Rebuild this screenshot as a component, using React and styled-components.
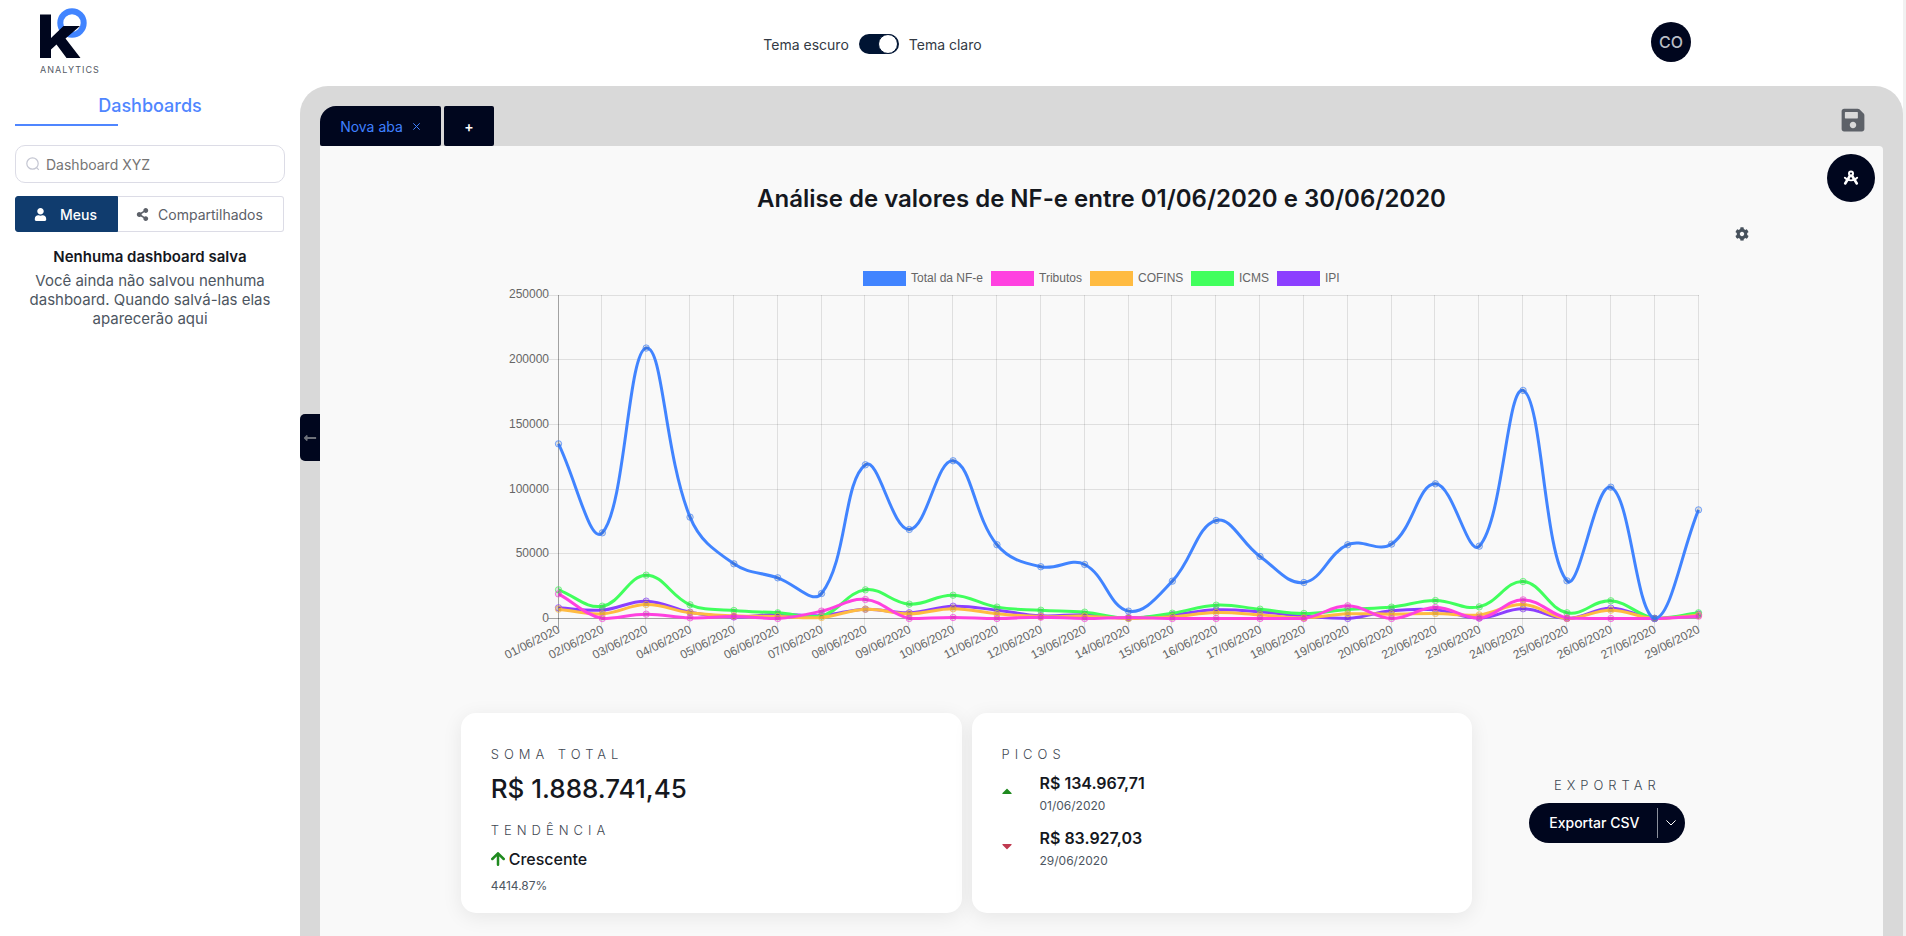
import React, { useState } from 'react';
import styled, { createGlobalStyle } from 'styled-components';
import {
    FaUser,
    FaShareAlt,
    FaSave,
    FaCog,
    FaLongArrowAltLeft,
    FaCaretUp,
    FaCaretDown
} from 'react-icons/fa';

const labels = [
    '01/06/2020', '02/06/2020', '03/06/2020', '04/06/2020', '05/06/2020', '06/06/2020', '07/06/2020',
    '08/06/2020', '09/06/2020', '10/06/2020', '11/06/2020', '12/06/2020', '13/06/2020', '14/06/2020',
    '15/06/2020', '16/06/2020', '17/06/2020', '18/06/2020', '19/06/2020', '20/06/2020', '22/06/2020',
    '23/06/2020', '24/06/2020', '25/06/2020', '26/06/2020', '27/06/2020', '29/06/2020'
];

const datasets = [
    {
        label: 'Total da NF-e',
        color: '#4184ff',
        legendX: 363,
        data: [134967, 66230, 209000, 78340, 42260, 31440, 19330, 118800, 68800, 121900, 57000, 40000, 41750, 5700, 28860, 75760, 47900, 27830, 57000, 57500, 104100, 55900, 176270, 29120, 101500, 0, 83927]
    },
    {
        label: 'Tributos',
        color: '#ff41e0',
        legendX: 491,
        data: [19000, 0, 3350, 500, 1500, 0, 5700, 14700, 0, 800, 0, 1000, 0, 800, 0, 0, 0, 0, 9800, 0, 8500, 300, 14400, 400, 0, 0, 1800]
    },
    {
        label: 'COFINS',
        color: '#ffbb41',
        legendX: 590,
        data: [7200, 3600, 10800, 4400, 2100, 1500, 800, 7200, 3600, 7500, 3600, 1500, 1800, 0, 1300, 4600, 2800, 500, 3600, 3350, 3900, 2800, 10800, 0, 6400, 0, 2500]
    },
    {
        label: 'ICMS',
        color: '#41ff5d',
        legendX: 691,
        data: [22160, 9500, 33500, 10600, 6200, 4400, 2000, 22160, 11100, 18000, 8800, 6400, 4900, 300, 4100, 10300, 7200, 3900, 7000, 8800, 13900, 9000, 28600, 4400, 13700, 200, 4400]
    },
    {
        label: 'IPI',
        color: '#8c3fff',
        legendX: 777,
        data: [8250, 6500, 13400, 4900, 1200, 3300, 2300, 7200, 4400, 9500, 6400, 2100, 2900, 300, 2800, 6700, 5200, 1800, 0, 5900, 6700, 400, 7500, 0, 8000, 0, 3300]
    }
];

const area = { left: 58, right: 1198, top: 35, bottom: 358.5 };
const max = 250000;

const toX = (i) => area.left + (i * (area.right - area.left)) / (labels.length - 1);
const toY = (v) => area.bottom - (v / max) * (area.bottom - area.top);
const clamp = (v) => Math.min(Math.max(v, area.top), area.bottom);
const crisp = (v) => Math.floor(v) + 0.5;

// smooth line with a 0.4 tension, control points are kept inside the chart area
function curve(points) {
    const controls = points.map((p, i) => {
        const prev = points[i - 1] || p;
        const next = points[i + 1] || p;
        const d01 = Math.hypot(p.x - prev.x, p.y - prev.y);
        const d12 = Math.hypot(next.x - p.x, next.y - p.y);
        const fa = (0.4 * d01) / (d01 + d12);
        const fb = (0.4 * d12) / (d01 + d12);

        return {
            before: { x: p.x - fa * (next.x - prev.x), y: clamp(p.y - fa * (next.y - prev.y)) },
            after: { x: p.x + fb * (next.x - prev.x), y: clamp(p.y + fb * (next.y - prev.y)) }
        };
    });

    return points.reduce((d, p, i) => {
        if (i === 0) return `M${p.x},${p.y}`;
        const a = controls[i - 1].after;
        const b = controls[i].before;
        return `${d} C${a.x},${a.y} ${b.x},${b.y} ${p.x},${p.y}`;
    }, '');
}

const Chart = () => {
    const ticks = [0, 50000, 100000, 150000, 200000, 250000];

    return (
        <ChartCanvas viewBox="0 0 1203 410" role="img" aria-label="Valores de NF-e por dia">
            {datasets.map((set) => (
                <g key={set.label}>
                    <rect x={set.legendX} y="11" width="43" height="15" fill={set.color} />
                    <text x={set.legendX + 48} y="22">{set.label}</text>
                </g>
            ))}

            {ticks.map((tick) => (
                <g key={tick}>
                    <path d={`M${area.left - 10} ${crisp(toY(tick))}H${area.right + 1}`} stroke="#000" strokeOpacity={tick === 0 ? 0.35 : 0.1} />
                    <text x={area.left - 9} y={Math.ceil(toY(tick)) + 3} textAnchor="end">{tick}</text>
                </g>
            ))}

            {labels.map((label, i) => (
                <g key={label}>
                    <path d={`M${crisp(toX(i))} ${area.top}V${area.bottom + 10}`} stroke="#000" strokeOpacity={i === 0 ? 0.35 : 0.1} />
                    <text transform={`translate(${toX(i) + 1} ${area.bottom + 10}) rotate(-27)`} y="4" textAnchor="end">{label}</text>
                </g>
            ))}

            {[...datasets].reverse().map((set) => {
                const points = set.data.map((v, i) => ({ x: toX(i) + 0.5, y: toY(v) }));

                return (
                    <g key={set.label}>
                        <path d={curve(points)} fill="none" stroke={set.color} strokeWidth="3" />
                        {points.map((p) => (
                            <circle key={p.x} cx={p.x} cy={p.y} r="3.2" fill="#000" fillOpacity="0.1" stroke={set.color} strokeOpacity="0.7" />
                        ))}
                    </g>
                );
            })}
        </ChartCanvas>
    );
};

const Logo = () => (
    <LogoWrapper href="#">
        <svg width="50" height="52" viewBox="0 0 50 52" aria-hidden="true">
            <circle cx="32" cy="16" r="11.7" fill="none" stroke="#4184ff" strokeWidth="6" />
            <path d="M0 7.500h11V31L23.500 19H40L25.500 31.500L40.500 51H26.500L16.500 37.500L11 42.500V51H0z" fill="#00061e" />
        </svg>
        <LogoText>ANALYTICS</LogoText>
    </LogoWrapper>
);

const CompassIcon = () => (
    <svg width="16" height="16" viewBox="0 0 16 16" fill="none" stroke="#fff" strokeLinecap="round" aria-hidden="true">
        <circle cx="8" cy="3.400" r="2" strokeWidth="2" />
        <path d="M6.800 6L2.200 13.500M9.200 6L13.800 13.500" strokeWidth="2.600" />
        <path d="M1.800 7.600C4.500 11.200 11.500 11.200 14.200 7.600" strokeWidth="1.800" />
    </svg>
);

const App = () => {
    const [light, setLight] = useState(true);

    return (
        <Page>
            <GlobalStyle />

            <Header>
                <Logo />
                <ThemeSwitch>
                    <span>Tema escuro</span>
                    <Switch type="checkbox" aria-label="Tema claro" checked={light} onChange={() => setLight(!light)} />
                    <span>Tema claro</span>
                </ThemeSwitch>
                <Avatar type="button">CO</Avatar>
            </Header>

            <Body>
                <Sidebar>
                    <SidebarTitle>Dashboards</SidebarTitle>
                    <SearchBox>
                        <svg width="14" height="14" viewBox="0 0 14 14" fill="none" stroke="#c4c6d2" strokeWidth="1.2" aria-hidden="true">
                            <circle cx="6.500" cy="6.500" r="5.700" />
                            <path d="M10.500 10.500L12.800 12.800" />
                        </svg>
                        <input type="text" aria-label="Buscar dashboard" placeholder="Dashboard XYZ" />
                    </SearchBox>
                    <Filter>
                        <FilterButton type="button" $active><FaUser /> Meus</FilterButton>
                        <FilterButton type="button"><FaShareAlt /> Compartilhados</FilterButton>
                    </Filter>
                    <EmptyTitle>Nenhuma dashboard salva</EmptyTitle>
                    <EmptyText>Você ainda não salvou nenhuma dashboard. Quando salvá-las elas aparecerão aqui</EmptyText>
                </Sidebar>

                <Workspace>
                    <Collapse type="button" aria-label="Recolher menu"><FaLongArrowAltLeft /></Collapse>

                    <TabBar>
                        <Tab>
                            <button type="button">Nova aba</button>
                            <button type="button" aria-label="Fechar aba">
                                <svg width="7" height="7" viewBox="0 0 7 7" stroke="currentColor" aria-hidden="true">
                                    <path d="M0.300 0.300L6.700 6.700M6.700 0.300L0.300 6.700" />
                                </svg>
                            </button>
                        </Tab>
                        <NewTab type="button">+</NewTab>
                        <SaveButton type="button" aria-label="Salvar"><FaSave /></SaveButton>
                    </TabBar>

                    <Panel>
                        <DesignButton type="button" aria-label="Editar"><CompassIcon /></DesignButton>
                        <Title>Análise de valores de NF-e entre 01/06/2020 e 30/06/2020</Title>
                        <Tools>
                            <button type="button" aria-label="Configurar"><FaCog /></button>
                        </Tools>
                        <Chart />

                        <Summary>
                            <Cards>
                                <Card>
                                    <Caption>SOMA TOTAL</Caption>
                                    <Total>R$ 1.888.741,45</Total>
                                    <Caption>TENDÊNCIA</Caption>
                                    <Trend>
                                        <svg width="14" height="14" viewBox="0 0 14 14" fill="none" stroke="#1f8a1f" strokeWidth="2.5" strokeLinecap="round" strokeLinejoin="round" aria-hidden="true">
                                            <path d="M7 12.700V1.500M1.300 7L7 1.300L12.700 7" />
                                        </svg>
                                        Crescente
                                    </Trend>
                                    <Small>4414.87%</Small>
                                </Card>
                                <Card>
                                    <Caption>PICOS</Caption>
                                    <Peaks>
                                        <Peak $color="#1f8a1f">
                                            <FaCaretUp />
                                            <div>
                                                <strong>R$ 134.967,71</strong>
                                                <Small>01/06/2020</Small>
                                            </div>
                                        </Peak>
                                        <Peak $color="#c03a50">
                                            <FaCaretDown />
                                            <div>
                                                <strong>R$ 83.927,03</strong>
                                                <Small>29/06/2020</Small>
                                            </div>
                                        </Peak>
                                    </Peaks>
                                </Card>
                            </Cards>
                            <Export>
                                <Caption>EXPORTAR</Caption>
                                <ExportGroup>
                                    <button type="button">Exportar CSV</button>
                                    <button type="button" aria-label="Mais formatos">
                                        <svg width="10" height="6" viewBox="0 0 10 6" fill="none" stroke="#fff" strokeLinecap="round" strokeLinejoin="round" aria-hidden="true">
                                            <path d="M0.700 0.700L5 5L9.300 0.700" />
                                        </svg>
                                    </button>
                                </ExportGroup>
                            </Export>
                        </Summary>
                    </Panel>
                </Workspace>
            </Body>
        </Page>
    );
};

const GlobalStyle = createGlobalStyle`
    * {
        box-sizing: border-box;
    }

    body {
        margin: 0;
        background: #fff;
        color: #15181e;
        font-family: Inter, sans-serif;
        font-size: 14px;
    }

    button, input {
        font-family: inherit;
        font-size: inherit;
        letter-spacing: inherit;
    }

    button {
        padding: 0;
        border: 0;
        background: none;
        color: inherit;
        cursor: pointer;
    }

    h1, h2, h3, p {
        margin: 0;
    }
`

const Page = styled.div`
    display: flex;
    flex-direction: column;
    min-height: 100vh;
    border-right: 3px solid #f1f1f1;
`

const Header = styled.header`
    display: grid;
    grid-template-columns: 300px 1fr 458px;
    height: 86px;
`

const LogoWrapper = styled.a`
    display: flex;
    flex-direction: column;
    gap: 6px;
    padding: 7px 0 0 40px;
    text-decoration: none;
`

const LogoText = styled.span`
    color: #555b66;
    font-size: 9px;
    line-height: 10px;
    letter-spacing: 1px;
`

const ThemeSwitch = styled.div`
    display: flex;
    align-items: center;
    justify-content: center;
    gap: 10px;
    height: 88px;
    color: #333a44;
`

const Switch = styled.input`
    display: flex;
    align-items: center;
    justify-content: flex-end;
    appearance: none;
    width: 40px;
    height: 20px;
    margin: 0;
    padding: 0 1px;
    border-radius: 10px;
    background: #001433;
    cursor: pointer;

    &::after {
        content: '';
        width: 18px;
        height: 18px;
        border-radius: 50%;
        border: 1px solid #001433;
        background: #fff;
    }

    &:not(:checked) {
        justify-content: flex-start;
    }
`

const Avatar = styled.button`
    justify-self: end;
    width: 40px;
    height: 40px;
    margin: 22px 212px 0 0;
    border-radius: 50%;
    background: #00061e;
    color: #b9bec6;
    font-size: 16px;
    font-weight: 500;
`

const Body = styled.div`
    display: flex;
    flex: 1;
`

const Sidebar = styled.aside`
    width: 300px;
    flex-shrink: 0;
    padding: 0 15px;
    text-align: center;
`

const SidebarTitle = styled.h2`
    height: 40px;
    padding-top: 8px;
    background: linear-gradient(#4f86ff, #4f86ff) left bottom / 103px 2px no-repeat;
    color: #4f86ff;
    font-size: 18px;
    font-weight: 500;
    line-height: 24px;
`

const SearchBox = styled.label`
    display: flex;
    align-items: center;
    gap: 6px;
    height: 38px;
    margin-top: 19px;
    padding: 0 10px;
    border: 1px solid #dcdce6;
    border-radius: 10px;

    input {
        flex: 1;
        min-width: 0;
        padding: 0;
        border: 0;
        outline: 0;
        background: none;
    }

    input::placeholder {
        color: #757575;
    }
`

const Filter = styled.div`
    display: flex;
    margin: 13px 1px 0 0;
`

const FilterButton = styled.button`
    display: flex;
    align-items: center;
    justify-content: center;
    gap: ${props => props.$active ? '13px' : '9px'};
    flex: ${props => props.$active ? '0 0 103px' : '1'};
    height: 36px;
    padding-right: 2px;
    border: 1px solid ${props => props.$active ? '#103c6e' : '#dcdce6'};
    border-left-width: ${props => props.$active ? '1px' : '0'};
    border-radius: ${props => props.$active ? '3px 0 0 3px' : '0 3px 3px 0'};
    background: ${props => props.$active ? '#103c6e' : '#fff'};
    color: ${props => props.$active ? '#fff' : '#5c6068'};
    font-weight: ${props => props.$active ? 500 : 400};

    svg {
        font-size: 13px;
    }
`

const EmptyTitle = styled.h3`
    margin-top: 15px;
    font-size: 15px;
    font-weight: 600;
    line-height: 20px;
`

const EmptyText = styled.p`
    margin-top: 4px;
    color: #4d5661;
    font-size: 15px;
    line-height: 19px;
`

const Workspace = styled.main`
    position: relative;
    flex: 1;
    min-width: 0;
    padding: 20px 20px 0;
    border-radius: 28px 28px 0 0;
    background: #d9d9d9;
`

/* sits over the left edge of the workspace */
const Collapse = styled.button`
    position: absolute;
    top: 328px;
    left: 0;
    display: flex;
    align-items: center;
    justify-content: center;
    width: 20px;
    height: 47px;
    border-radius: 5px 0 0 5px;
    background: #00061e;
    color: #6d717a;
`

const TabBar = styled.div`
    display: flex;
    gap: 3px;
    height: 40px;
`

const Tab = styled.div`
    display: flex;
    align-items: center;
    justify-content: center;
    gap: 10px;
    width: 121px;
    padding-right: 1px;
    border-radius: 16px 2px 2px 2px;
    background: #00061e;
    color: #3f80ff;

    svg {
        display: block;
    }
`

const NewTab = styled.button`
    width: 50px;
    border-radius: 2px;
    background: #00061e;
    color: #fff;
    font-weight: 600;
`

const SaveButton = styled.button`
    display: flex;
    margin: 1px 17px 0 auto;
    color: #5d6168;
    font-size: 26px;
`

const Panel = styled.section`
    position: relative;
    display: flex;
    flex-direction: column;
    align-items: center;
    min-height: calc(100vh - 146px);
    padding: 37px 0 60px;
    border-radius: 0 4px 0 0;
    background: #f9f9f9;
`

/* floats over the top right corner of the panel */
const DesignButton = styled.button`
    position: absolute;
    top: 8px;
    right: 8px;
    display: flex;
    align-items: center;
    justify-content: center;
    width: 48px;
    height: 48px;
    border-radius: 50%;
    background: #00061e;
    color: #fff;
`

const Title = styled.h1`
    font-size: 24px;
    font-weight: 600;
    line-height: 32px;
`

const Tools = styled.div`
    display: flex;
    justify-content: flex-end;
    align-self: stretch;
    height: 45px;
    padding: 12px 134px 0;
    color: #47515c;

    button {
        height: 14px;
    }
`

const ChartCanvas = styled.svg`
    width: 100%;
    max-width: 1203px;
    overflow: visible;

    text {
        fill: #666;
        font-family: 'Liberation Sans', sans-serif;
        font-size: 12px;
    }
`

const Summary = styled.div`
    display: flex;
    align-items: center;
    width: 82%;
    margin-top: 43px;
`

const Cards = styled.div`
    display: grid;
    grid-template-columns: 1fr 1fr;
    gap: 10px;
    flex: 1;
`

const Card = styled.div`
    height: 200px;
    padding: 30px;
    border-radius: 15px;
    background: #fff;
    box-shadow: 0 4px 20px rgba(0, 0, 0, .08);
`

const Caption = styled.h3`
    color: #3f4953;
    font-size: 13px;
    font-weight: 300;
    line-height: 22px;
    letter-spacing: 5px;
`

const Total = styled.p`
    margin: 6px 0 12px;
    font-size: 26px;
    font-weight: 500;
    line-height: 36px;
`

const Trend = styled.p`
    display: flex;
    align-items: center;
    gap: 4px;
    margin: 8px 0 9px;
    font-size: 16px;
    font-weight: 500;
    line-height: 20px;
`

const Small = styled.p`
    color: #4d5661;
    font-size: 12px;
    line-height: 16px;
`

const Peaks = styled.div`
    display: flex;
    flex-direction: column;
    gap: 9px;
    margin-top: 3px;
`

const Peak = styled.div`
    display: flex;
    align-items: center;
    gap: 28px;

    strong {
        display: block;
        font-size: 16px;
        font-weight: 600;
        line-height: 30px;
    }

    > svg {
        width: 10px;
        height: 16px;
        color: ${props => props.$color};
    }
`

const Export = styled.div`
    display: flex;
    flex-direction: column;
    align-items: center;
    gap: 7px;
    width: 270px;
    padding-bottom: 10px;
`

const ExportGroup = styled.div`
    display: flex;
    align-items: center;
    height: 40px;
    border-radius: 20px;
    background: #00061e;
    color: #fff;

    button {
        height: 30px;
        padding: 0 18px 0 20px;
        font-weight: 500;
    }

    button + button {
        padding: 0 9px 0 8px;
        border-left: 1px solid #8a8f9c;
    }

    svg {
        display: block;
    }
`

export default App;
